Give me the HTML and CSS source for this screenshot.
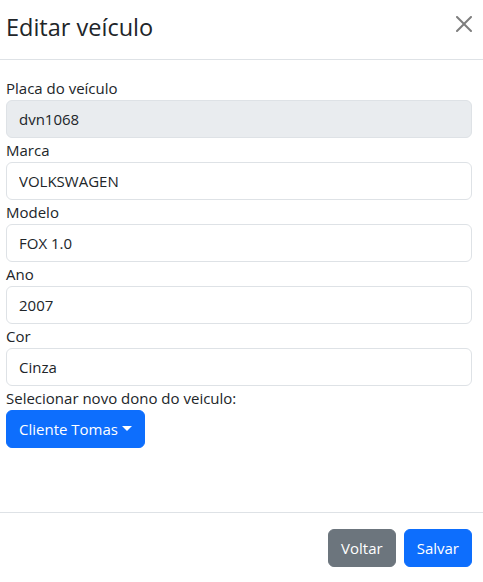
FILE: index.html
```html
<!DOCTYPE html>
<html lang="pt-BR">
<head>
<meta charset="utf-8">
<title>Editar veículo</title>
<link rel="stylesheet" href="styles.css">
</head>
<body>
<div class="modal">
  <div class="modal-header">
    <h5 class="modal-title">Editar veículo</h5>
    <button class="btn-close" type="button" aria-label="Close">
      <svg viewBox="0 0 16 16" width="16" height="16"><path d="M.293.293a1 1 0 0 1 1.414 0L8 6.586 14.293.293a1 1 0 1 1 1.414 1.414L9.414 8l6.293 6.293a1 1 0 0 1-1.414 1.414L8 9.414l-6.293 6.293a1 1 0 0 1-1.414-1.414L6.586 8 .293 1.707a1 1 0 0 1 0-1.414z"/></svg>
    </button>
  </div>
  <div class="modal-body">
    <label class="form-label">Placa do veículo</label>
    <input class="form-control" type="text" value="dvn1068" disabled>
    <label class="form-label">Marca</label>
    <input class="form-control" type="text" value="VOLKSWAGEN">
    <label class="form-label">Modelo</label>
    <input class="form-control" type="text" value="FOX 1.0">
    <label class="form-label">Ano</label>
    <input class="form-control" type="text" value="2007">
    <label class="form-label">Cor</label>
    <input class="form-control" type="text" value="Cinza">
    <label class="form-label">Selecionar novo dono do veiculo:</label>
    <div class="dropdown">
      <button class="btn btn-primary dropdown-toggle" type="button">Cliente Tomas</button>
    </div>
  </div>
  <div class="modal-footer">
    <button class="btn btn-secondary" type="button">Voltar</button>
    <button class="btn btn-primary" type="button">Salvar</button>
  </div>
</div>
</body>
</html>
```
FILE: styles.css
```css
* { box-sizing: border-box; }
html, body {
  margin: 0;
  padding: 0;
  background: #fff;
}
body {
  font-family: "Open Sans", "Noto Sans", "Liberation Sans", sans-serif;
  font-size: 15px;
  line-height: 24px;
  color: #212529;
}
.modal {
  width: 483px;
  display: flex;
  flex-direction: column;
}
.modal-header {
  display: flex;
  align-items: flex-start;
  justify-content: space-between;
  height: 60px;
  padding: 9px 11px 0 6px;
  border-bottom: 1px solid #dee2e6;
}
.modal-title {
  margin: 0;
  font-size: 23.5px;
  font-weight: 500;
  line-height: 36px;
}
.btn-close {
  width: 16px;
  height: 16px;
  padding: 0;
  border: 0;
  background: transparent;
  opacity: 0.5;
  display: flex;
  margin-top: 7px;
}
.btn-close svg { fill: #000; }
.modal-body {
  padding: 16px 11px 16px 6px;
  display: flex;
  flex-direction: column;
}
.form-label {
  display: block;
  height: 24px;
  line-height: 24px;
}
.form-control {
  display: block;
  width: 100%;
  height: 38px;
  padding: 6px 12px;
  font: inherit;
  line-height: 24px;
  color: #212529;
  background: #fff;
  border: 1px solid #dee2e6;
  border-radius: 6px;
}
.form-control:disabled {
  background: #e9ecef;
}
.dropdown {
  margin-bottom: 48px;
}
.btn {
  display: inline-block;
  height: 38px;
  padding: 6px 12px;
  font: inherit;
  line-height: 24px;
  color: #fff;
  border: 1px solid transparent;
  border-radius: 6px;
  cursor: pointer;
}
.btn-primary { background: #0d6efd; border-color: #0d6efd; }
.btn-secondary { background: #6c757d; border-color: #6c757d; }
.dropdown-toggle::after {
  content: "";
  display: inline-block;
  margin-left: 4px;
  vertical-align: 4px;
  border-top: 5px solid;
  border-right: 5px solid transparent;
  border-left: 5px solid transparent;
  border-bottom: 0;
}
.modal-footer {
  display: flex;
  justify-content: flex-end;
  gap: 8px;
  padding: 16px 11px 16px 6px;
  border-top: 1px solid #dee2e6;
}
```
